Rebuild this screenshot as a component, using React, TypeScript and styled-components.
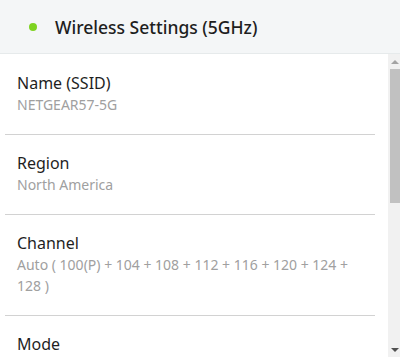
import styled, { createGlobalStyle } from "styled-components";

const GlobalStyle = createGlobalStyle`
  html, body {
    margin: 0;
    padding: 0;
    background: #fff;
  }
  body {
    font-family: "Noto Sans", "Open Sans", sans-serif;
  }
`;

const Panel = styled.div`
  width: 400px;
  height: 363px;
  display: flex;
  flex-direction: column;
  overflow: hidden;
  background: #fff;
`;

const Header = styled.div`
  height: 53px;
  flex: none;
  display: flex;
  align-items: center;
  padding-left: 29px;
  gap: 18px;
  background: #f4f6f7;
  border-bottom: 1px solid #e6eaeb;
`;

const StatusDot = styled.span`
  width: 8px;
  height: 8px;
  border-radius: 50%;
  background: #7ed321;
`;

const Title = styled.span`
  font-size: 17.5px;
  font-weight: 500;
  color: #1e1e1e;
`;

const Body = styled.div`
  flex: 1;
  display: flex;
  min-height: 0;
  margin-bottom: 6px;
  overflow: hidden;
`;

const List = styled.div`
  flex: 1;
  padding: 1px 13px 0 5px;
`;

const Item = styled.div`
  padding: 18px 14px 19px 12px;
  border-bottom: 1px solid #d2d2d2;
`;

const Label = styled.div`
  font-size: 16px;
  line-height: 21px;
  color: #1f1f1f;
`;

const Value = styled.div`
  font-size: 14px;
  line-height: 21px;
  color: #a0a0a0;
`;

const Scrollbar = styled.div`
  width: 12px;
  flex: none;
  background: #f1f1f1;
  display: flex;
  flex-direction: column;
  align-items: flex-end;
`;

const Arrow = styled.div<{ $down?: boolean }>`
  height: 15px;
  width: 10px;
  display: flex;
  align-items: center;
  justify-content: center;
  &::before {
    content: "";
    border-left: 4px solid transparent;
    border-right: 4px solid transparent;
    ${(p) =>
      p.$down
        ? "border-top: 4px solid #505050;"
        : "border-bottom: 4px solid #a3a3a3;"}
  }
`;

const Thumb = styled.div`
  width: 10px;
  height: 134px;
  background: #c1c1c1;
`;

const Spacer = styled.div`
  flex: 1;
`;

const items: { label: string; value?: string }[] = [
  { label: "Name (SSID)", value: "NETGEAR57-5G" },
  { label: "Region", value: "North America" },
  {
    label: "Channel",
    value: "Auto ( 100(P) + 104 + 108 + 112 + 116 + 120 + 124 + 128 )",
  },
  { label: "Mode" },
];

export default function App() {
  return (
    <Panel>
      <GlobalStyle />
      <Header>
        <StatusDot />
        <Title>Wireless Settings (5GHz)</Title>
      </Header>
      <Body>
        <List>
          {items.map((it) => (
            <Item key={it.label}>
              <Label>{it.label}</Label>
              {it.value && <Value>{it.value}</Value>}
            </Item>
          ))}
        </List>
        <Scrollbar>
          <Arrow />
          <Thumb />
          <Spacer />
          <Arrow $down />
        </Scrollbar>
      </Body>
    </Panel>
  );
}
